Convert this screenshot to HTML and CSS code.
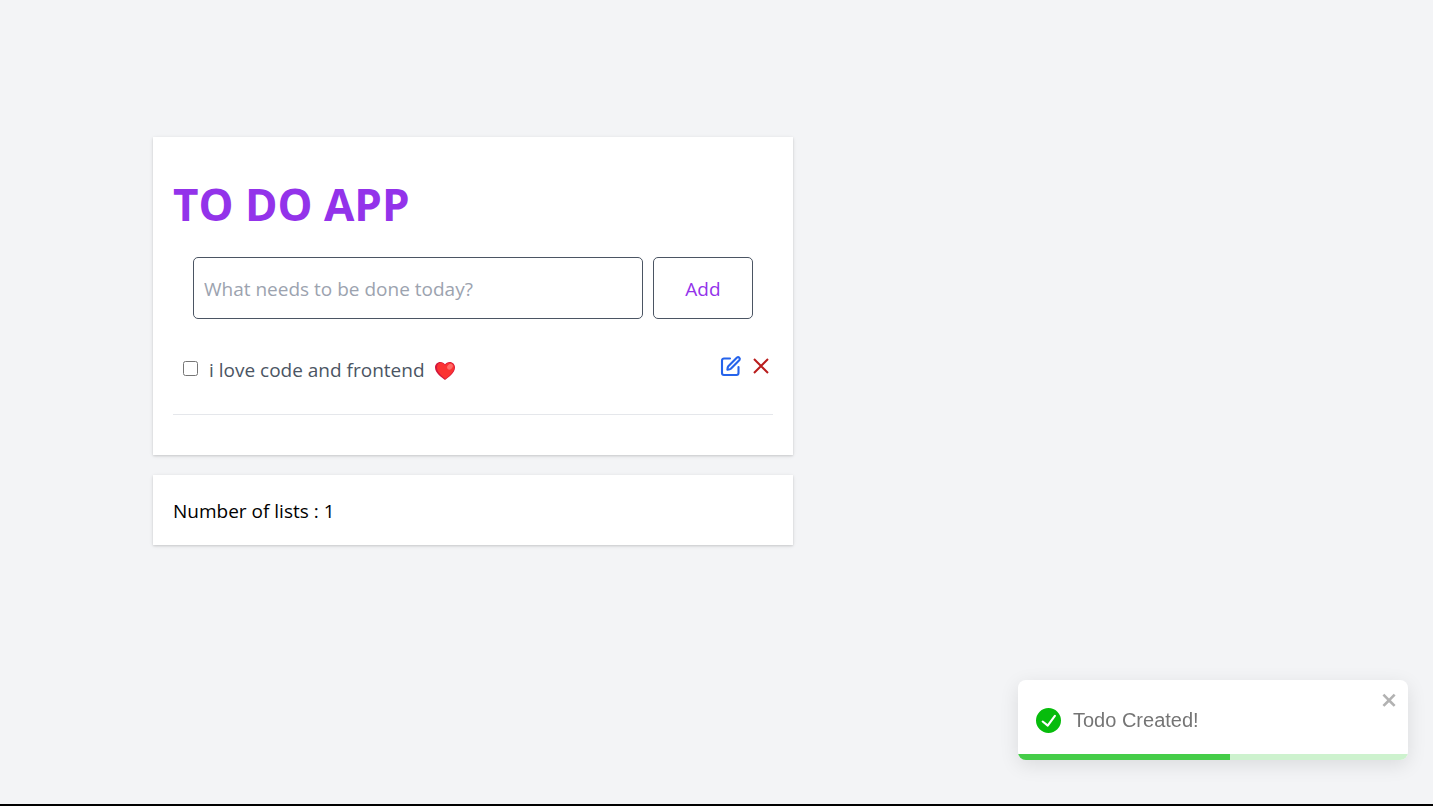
FILE: index.html
```html
<!DOCTYPE html>
<html lang="en">
<head>
  <meta charset="utf-8">
  <meta name="viewport" content="width=device-width, initial-scale=1">
  <title>To Do App</title>
  <link rel="stylesheet" href="styles.css">
</head>
<body>
  <main class="page">
    <section class="card todo">
      <h1 class="title">TO DO APP</h1>
      <form class="add-form">
        <input class="add-input" type="text" aria-label="New todo" placeholder="What needs to be done today?">
        <button class="add-button" type="button">Add</button>
      </form>
      <ul class="list">
        <li class="item">
          <label class="item-label">
            <input class="item-check" type="checkbox">
            <span class="item-text">i love code and frontend</span>
            <svg class="heart" viewBox="0 0 20 18" role="img" aria-label="red heart">
              <path fill="#d3173c" d="M10 18C7 15.500 0 11 0 5.500C0 2.400 2.300 0 5.300 0C7.400 0 9.100 1 10 2.600C10.900 1 12.600 0 14.700 0C17.700 0 20 2.400 20 5.500C20 11 13 15.500 10 18Z"/>
              <path fill="#fb3232" d="M10.500 17C8 14.700 2 10.500 2 5.400C2 2.700 3.700.7 6 .7C8 .7 9.300 2 10 3.500C10.900 1.800 12.600.7 14.700.7C17.400.7 19.300 2.800 19.300 5.500C19.300 10.500 13 14.700 10.500 17Z"/>
              <ellipse cx="15" cy="4.700" rx="3.200" ry="2.400" fill="#ff6b66" transform="rotate(-45 15 4.700)"/>
            </svg>
          </label>
          <div class="actions">
            <button class="icon-button edit" type="button" aria-label="Edit">
              <svg viewBox="0 0 20 20" fill="none" stroke="currentColor" stroke-width="2.100" stroke-linecap="round" stroke-linejoin="round">
                <path d="M9 2.500H3A2 2 0 0 0 1 4.500V17A2 2 0 0 0 3 19H15.500A2 2 0 0 0 17.500 17V11"/>
                <path d="M16 1.500A1.800 1.800 0 0 1 18.500 4L9.800 12.700C9 13.400 8 13.500 6.400 13.600C6.500 12 6.600 11 7.300 10.200Z"/>
              </svg>
            </button>
            <button class="icon-button remove" type="button" aria-label="Delete">
              <svg viewBox="0 0 20 20" fill="none" stroke="currentColor" stroke-width="2">
                <path d="M3 3L17 17M17 3L3 17"/>
              </svg>
            </button>
          </div>
        </li>
      </ul>
    </section>
    <section class="card summary">
      <p class="count">Number of lists : 1</p>
    </section>
  </main>
  <div class="toast" role="alert">
    <div class="toast-body">
      <svg class="toast-icon" viewBox="0 0 24 24" aria-hidden="true">
        <path fill="#07bc0c" d="M12 0a12 12 0 1012 12A12.014 12.014 0 0012 0zm6.927 8.200l-6.845 9.289a1.011 1.011 0 01-1.430.188l-4.888-3.908a1 1 0 111.250-1.562l4.076 3.261 6.227-8.451a1 1 0 111.610 1.183z"/>
      </svg>
      <span>Todo Created!</span>
    </div>
    <button class="toast-close" type="button" aria-label="Close">
      <svg viewBox="0 0 14 16" aria-hidden="true">
        <path fill="currentColor" fill-rule="evenodd" d="M7.710 8.230l3.750 3.750-1.480 1.480-3.750-3.750-3.750 3.750L1 11.980l3.750-3.750L1 4.480 2.480 3l3.750 3.750L9.980 3l1.480 1.480-3.750 3.750z"/>
      </svg>
    </button>
    <div class="toast-track"><div class="toast-progress" style="width: 54.4%"></div></div>
  </div>
</body>
</html>
```
FILE: styles.css
```css
* {
  box-sizing: border-box;
}

body {
  margin: 0;
  min-height: 100vh;
  background: #f3f4f6;
  border-bottom: 2px solid #000;
  color: #000;
  font-family: "Open Sans", "Noto Sans", sans-serif;
  font-size: 19px;
  line-height: 30px;
}

.page {
  display: flex;
  flex-direction: column;
  gap: 20px;
  max-width: 793px;
  padding: 137px 0 20px 153px;
}

.card {
  padding: 20px;
  background: #fff;
  box-shadow: 0 1px 4px rgba(0, 0, 0, 0.1), 0 1px 2px rgba(0, 0, 0, 0.1);
}

.todo {
  padding: 40px 20px;
}

.summary {
  padding: 21px 20px 19px;
}

.title {
  margin: 0 0 26px;
  color: #9333ea;
  font-size: 44px;
  font-weight: 700;
  line-height: 54px;
}

.add-form {
  display: flex;
  gap: 10px;
  padding: 0 20px;
}

.add-input,
.add-button {
  height: 62px;
  padding: 2px 10px 0;
  border: 1px solid #4b5563;
  border-radius: 5px;
  background: #fff;
  font: inherit;
}

.add-input {
  flex: 1;
  min-width: 0;
  color: #4b5563;
}

.add-input::placeholder {
  color: #9ca3af;
  opacity: 1;
}

.add-button {
  width: 100px;
  color: #9333ea;
  cursor: pointer;
}

.list {
  margin: 0;
  padding: 0;
  list-style: none;
}

.item {
  display: flex;
  align-items: flex-start;
  justify-content: space-between;
  padding: 36px 0 29px 10px;
  border-bottom: 1px solid #e5e7eb;
}

.item-label {
  display: flex;
  align-items: center;
  color: #4b5563;
}

.item-check {
  width: 15px;
  height: 15px;
  margin: 0 11px 4px 0;
}

.heart {
  width: 20px;
  height: 18px;
  margin: 2px 0 0 10px;
}

.actions {
  display: flex;
  gap: 10px;
  padding: 1px 2px 0 0;
}

.icon-button,
.toast-close {
  display: flex;
  padding: 0;
  border: 0;
  background: none;
  cursor: pointer;
}

.icon-button svg {
  width: 20px;
  height: 20px;
  overflow: visible;
}

.edit {
  color: #2563eb;
}

.remove {
  color: #b91c1c;
}

.count {
  margin: 0;
}

.toast {
  position: fixed;
  right: 25px;
  bottom: 46px;
  width: 390px;
  overflow: hidden;
  border-radius: 8px;
  background: #fff;
  box-shadow: 0 5px 19px rgba(0, 0, 0, 0.1);
  color: #757575;
  font-family: "Liberation Sans", Arial, sans-serif;
  font-size: 20px;
}

.toast-body {
  display: flex;
  align-items: center;
  gap: 12px;
  height: 74px;
  padding: 6px 18px 0;
}

.toast-icon {
  width: 25px;
  height: 25px;
}

.toast-close {
  position: absolute;
  top: 10px;
  right: 9px;
  color: #b2b2b2;
}

.toast-close svg {
  width: 18px;
  height: 20px;
}

.toast-track {
  height: 6px;
  background: #cdf2ce;
}

.toast-progress {
  height: 100%;
  background: #45cd49;
}
```
